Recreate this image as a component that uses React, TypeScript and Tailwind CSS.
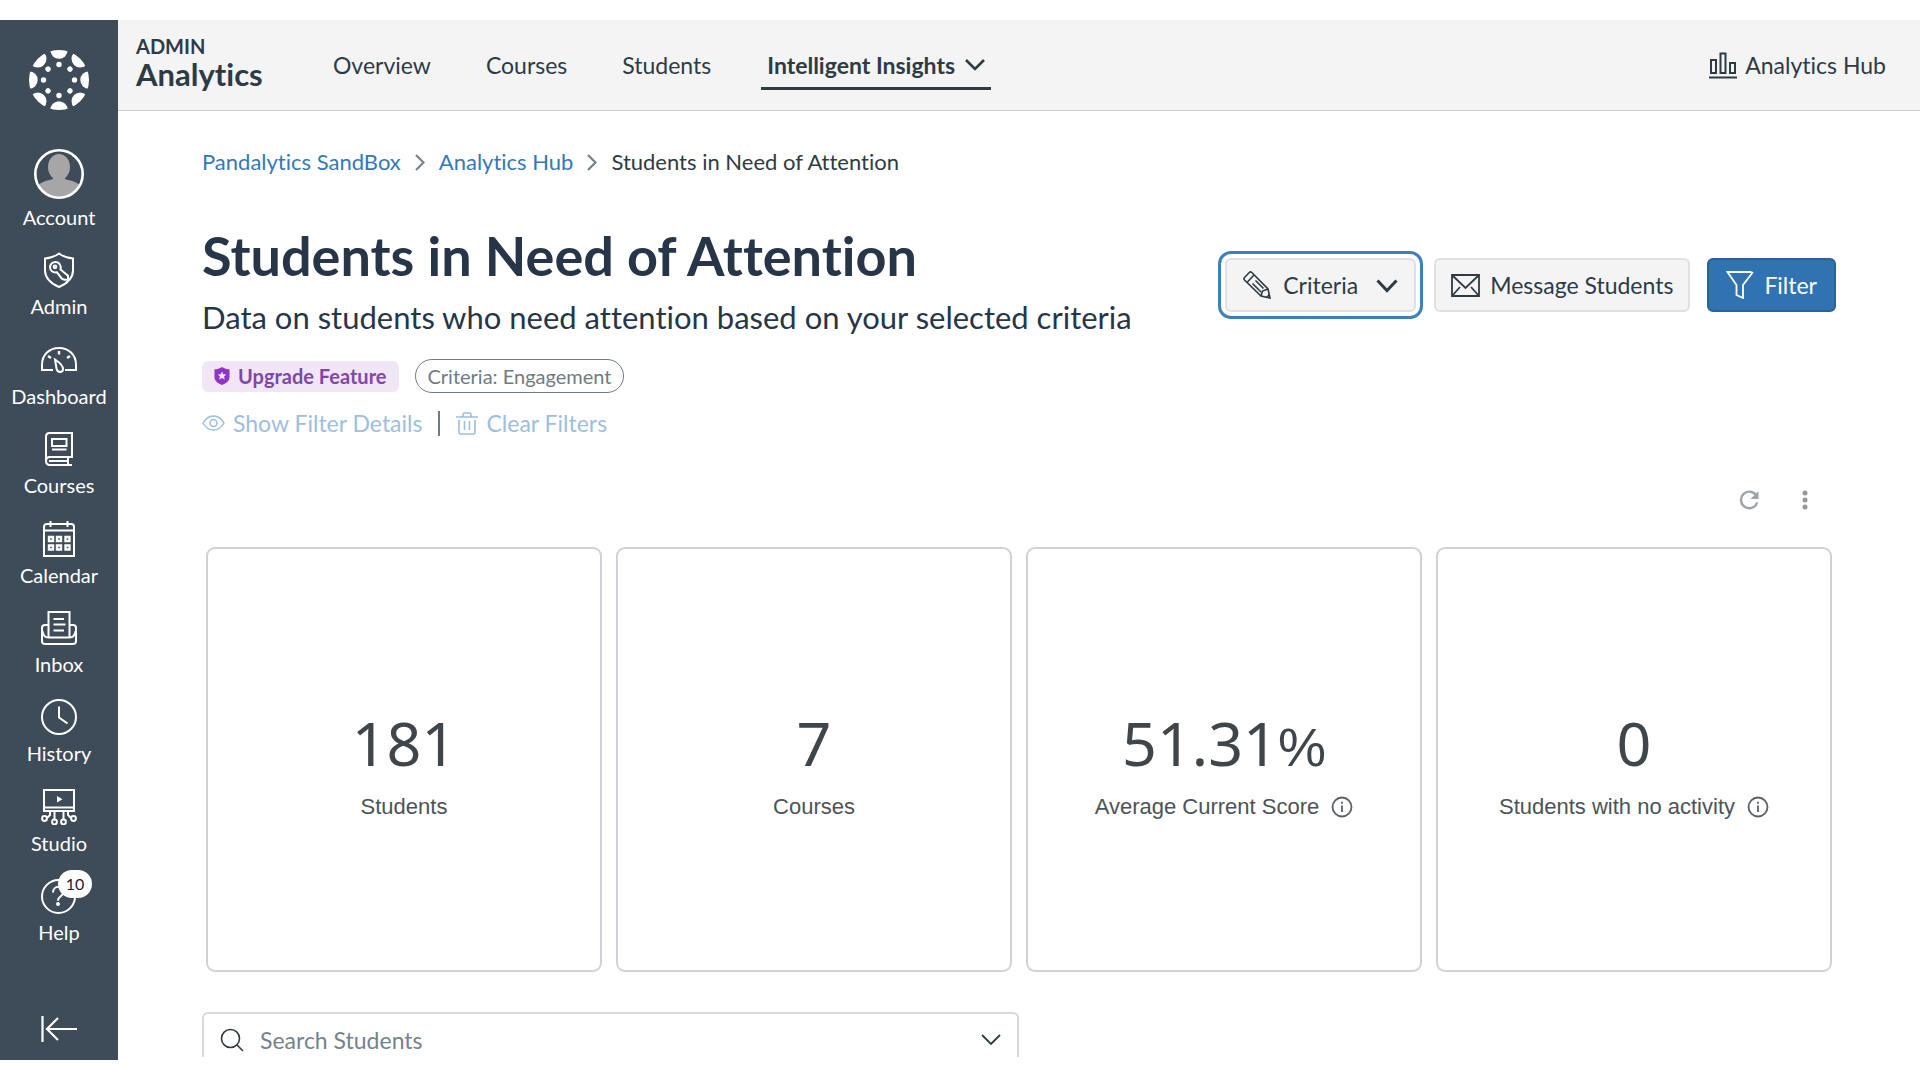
import type { ReactNode } from "react";

const NAV_ITEMS = ["Overview", "Courses", "Students"];

export default function App() {
  return (
    <div className="flex h-screen min-h-[800px] overflow-hidden bg-white py-5 font-['Lato',sans-serif] text-[#2d3b45] [font-variant-ligatures:none]">
      <Sidebar />

      <div className="flex min-w-0 flex-1 flex-col">
        <TopBar />

        <main className="flex-1 overflow-hidden pl-[84px] pr-[84px]">
          <Breadcrumbs />

          {/* Title + actions */}
          <div className="mt-[47px] flex items-start justify-between">
            <div>
              <h1 className="text-[54px] leading-[66px] font-bold text-[#273548]">
                Students in Need of Attention
              </h1>
              <p className="mt-[9px] text-[31px] leading-[38px] text-[#273548]">
                Data on students who need attention based on your selected criteria
              </p>
            </div>

            <div className="mt-[35px] flex items-center">
              <button className="mr-[18px] flex h-[54px] items-center rounded-md border-2 border-[#e0e0e0] bg-[#f4f4f4] px-4 text-[23px] leading-7 outline-3 outline-offset-4 outline-[#3d7fbf]">
                <PencilIcon />
                <span className="ml-3">Criteria</span>
                <svg width="22" height="14" viewBox="0 0 22 14" fill="none" className="ml-[18px] mt-[2px]">
                  <path d="M1.5 1.5 11 11.5 20.5 1.5" stroke="#2d3b45" strokeWidth="3" />
                </svg>
              </button>
              <button className="mr-[17px] flex h-[54px] items-center rounded-md border-2 border-[#e0e0e0] bg-[#f4f4f4] px-[15px] text-[23px] leading-7">
                <MailIcon />
                <span className="ml-[10px]">Message Students</span>
              </button>
              <button className="flex h-[54px] items-center rounded-md border-2 border-[#28629c] bg-[#3172b2] px-[17px] text-[23px] leading-7 text-white">
                <FunnelIcon />
                <span className="ml-[10px]">Filter</span>
              </button>
            </div>
          </div>

          {/* Tags */}
          <div className="mt-[23px] flex items-center">
            <span className="flex h-[31px] items-center rounded-md bg-[#f1e6f5] px-3 text-[20px] leading-6 font-bold text-[#8345a8]">
              <ShieldStarIcon />
              <span className="ml-2">Upgrade Feature</span>
            </span>
            <span className="ml-4 flex h-[34px] items-center rounded-full border border-[#6f7b83] px-3 text-[20px] leading-6 text-[#6f7b83]">
              Criteria: Engagement
            </span>
          </div>

          <div className="mt-4 flex h-7 items-center text-[23px] leading-7 text-[#9dbedd]">
            <button className="flex items-center">
              <EyeIcon />
              <span className="ml-2">Show Filter Details</span>
            </button>
            <span className="ml-4 h-[25px] w-[2px] bg-[#6f7b83]" />
            <button className="ml-4 flex items-center">
              <TrashIcon />
              <span className="ml-2">Clear Filters</span>
            </button>
          </div>

          {/* Tile toolbar */}
          <div className="mt-[51px] flex h-6 items-center justify-end gap-8 pr-[19px]">
            <button aria-label="Refresh">
              <svg width="24" height="24" viewBox="0 0 24 24" fill="none">
                <path d="M19.3 7.5A8.3 8.3 0 1 0 20.2 14.5" stroke="#9ea4a8" strokeWidth="2.4" />
                <path d="M21.5 3v8h-8z" fill="#9ea4a8" />
              </svg>
            </button>
            <button aria-label="More options">
              <svg width="24" height="24" viewBox="0 0 24 24" fill="#939a9e">
                <circle cx="12" cy="5" r="2.5" />
                <circle cx="12" cy="12" r="2.5" />
                <circle cx="12" cy="19" r="2.5" />
              </svg>
            </button>
          </div>

          <div className="mt-[35px] grid grid-cols-4 gap-[14px] px-1">
            <StatCard value="181" label="Students" />
            <StatCard value="7" label="Courses" />
            <StatCard value="51.31" suffix="%" label="Average Current Score" info />
            <StatCard value="0" label="Students with no activity" info />
          </div>

          {/* Student search */}
          <label className="mt-[40px] flex h-[45px] w-1/2 items-center rounded-t-md border-2 border-b-0 border-[#d5d9dc] px-4 pt-2">
            <svg width="24" height="24" viewBox="0 0 24 24" fill="none" stroke="#2d3b45" strokeWidth="1.6">
              <circle cx="10.5" cy="10.5" r="9" />
              <path d="m17 17 6 6" />
            </svg>
            <input
              type="text"
              aria-label="Search Students"
              placeholder="Search Students"
              className="ml-4 min-w-0 flex-1 bg-transparent text-[23px] leading-7 outline-none placeholder:text-[#76828b]"
            />
            <svg width="20" height="12" viewBox="0 0 20 12" fill="none">
              <path d="m1 1 9 9 9-9" stroke="#2d3b45" strokeWidth="1.8" />
            </svg>
          </label>
        </main>
      </div>
    </div>
  );
}

function TopBar() {
  return (
    <header className="flex h-[91px] shrink-0 items-start border-b border-[#c3cad0] bg-[#f4f4f4] pl-[18px] pr-[34px]">
      <div className="mt-[14px] w-[197px] font-bold">
        <div className="text-[20px] leading-6">ADMIN</div>
        <div className="text-[31px] leading-8">Analytics</div>
      </div>
      <nav className="mt-[31px] flex text-[23px] leading-7">
        {NAV_ITEMS.map((item) => (
          <a key={item} href="#" className="mr-[55px]">
            {item}
          </a>
        ))}
        <a
          href="#"
          className="-ml-[5px] flex h-[39px] items-start border-b-3 border-[#2d3b45] px-[6px] font-bold"
        >
          Intelligent Insights
          <svg width="20" height="12" viewBox="0 0 20 12" fill="none" className="ml-[10px] mt-2">
            <path d="m1 1 9 9 9-9" stroke="#2d3b45" strokeWidth="2.6" />
          </svg>
        </a>
      </nav>
      <a href="#" className="ml-auto mt-[31px] flex items-center text-[23px] leading-7">
        <svg width="28" height="27" viewBox="0 0 28 27" fill="none" stroke="#2d3b45" strokeWidth="2" className="mr-2">
          <path d="M2 8h5v13H2zM11.5 1.5h5V21h-5zM21 11h5v10h-5zM0 25.5h28" />
        </svg>
        Analytics Hub
      </a>
    </header>
  );
}

function Breadcrumbs() {
  return (
    <nav
      aria-label="Breadcrumb"
      className="mt-[37px] flex items-center gap-[14px] text-[22px] leading-7 text-[#3478b8]"
    >
      <a href="#">Pandalytics SandBox</a>
      <CrumbArrow />
      <a href="#">Analytics Hub</a>
      <CrumbArrow />
      <span className="text-[#2d3b45]">Students in Need of Attention</span>
    </nav>
  );
}

function CrumbArrow() {
  return (
    <svg width="10" height="17" viewBox="0 0 10 17" fill="none">
      <path d="m1 1 7.5 7.5L1 16" stroke="#76828b" strokeWidth="2.2" />
    </svg>
  );
}

function StatCard({
  value,
  suffix,
  label,
  info,
}: {
  value: string;
  suffix?: string;
  label: string;
  info?: boolean;
}) {
  return (
    <section className="flex h-[425px] flex-col items-center rounded-[9px] border-2 border-[#cfd2d8] pt-[150px]">
      <div className="font-['Noto_Sans',sans-serif] text-[61px] leading-[88px] text-[#3f464b]">
        {value}
        {suffix && (
          <span className="font-['Liberation_Sans',sans-serif] text-[54px] leading-none">
            {suffix}
          </span>
        )}
      </div>
      <div className="mt-[6px] flex items-center gap-3 font-['Liberation_Sans',sans-serif] text-[22px] leading-7 text-[#4c5358]">
        {label}
        {info && (
          <svg width="22" height="22" viewBox="0 0 22 22" fill="none">
            <circle cx="11" cy="11" r="9.5" stroke="#5a6166" strokeWidth="1.8" />
            <path d="M11 9.5v6.5M11 5.8v2" stroke="#5a6166" strokeWidth="1.8" />
          </svg>
        )}
      </div>
    </section>
  );
}

/* ---------- Sidebar ---------- */

function Sidebar() {
  return (
    <aside className="flex w-[118px] shrink-0 flex-col items-center bg-[#3e4b58] text-white">
      <a href="#" aria-label="Home" className="mt-[30px]">
        <CanvasLogo />
      </a>

      <nav className="mt-[39px] flex h-[795px] flex-col justify-between">
        <SideItem label="Account">
          <Avatar />
        </SideItem>
        <SideItem label="Admin">
          <svg width="36" height="36" viewBox="0 0 36 36" fill="none" stroke="white" strokeWidth="2">
            <path d="M18 1.5c4 3 8.5 4.6 14 5v12c0 7-5 12.5-14 16.5C9 31 4 25.5 4 18.5v-12c5.5-.4 10-2 14-5z" />
            <path d="M19.5 17.5c1-3.5-1-7.500-5-7.500-3 0-5.500 2.300-5.500 5.300 0 3.800 3.400 5.700 7 5l5 6.500 2.500 1h3.500v-4z" />
            <circle cx="14" cy="14.8" r="1.4" />
          </svg>
        </SideItem>
        <SideItem label="Dashboard">
          <svg width="36" height="36" viewBox="0 0 36 36" fill="none" stroke="white" strokeWidth="2">
            <path d="M12 28H1v-5C1 12.5 8.5 6 18 6s17 6.500 17 17v5H24" />
            <path d="M18 9v3.500M7 14l3 2M29 14l-3 2" strokeWidth="2.4" />
            <path d="M14 17.500c4.500 3 8 6.500 8 9.500 0 2-1.200 3-3 3s-3-1.300-3.500-3.500z" />
          </svg>
        </SideItem>
        <SideItem label="Courses">
          <svg width="36" height="36" viewBox="0 0 36 36" fill="none" stroke="white" strokeWidth="2">
            <path d="M5 30V5.500C5 3 6.500 2 8.500 2H31v24H9c-2.500 0-4 1.600-4 4s1.500 4 4 4h22" />
            <path d="M11 8h14.500v7H11zM11 18.500h14.500M8 30h19v-4M27 30v4" />
          </svg>
        </SideItem>
        <SideItem label="Calendar">
          <svg width="36" height="36" viewBox="0 0 36 36" fill="none" stroke="white" strokeWidth="2">
            <path d="M3 35V6c0-2 1-3 3-3h24c2 0 3 1 3 3v29zM3 9.500h30M9.500 0v6M26.500 0v6" />
            <path
              d="M8 16h4v4H8zM16 16h4v4h-4zM24.500 16h4v4h-4zM8 24.500h4v4H8zM16 24.500h4v4h-4zM24.500 24.500h4v4h-4z"
              strokeWidth="2.4"
            />
          </svg>
        </SideItem>
        <SideItem label="Inbox">
          <svg width="36" height="36" viewBox="0 0 36 36" fill="none" stroke="white" strokeWidth="2">
            <path d="M7.500 27V2h21v25" />
            <path d="M12.500 9H23M12.500 14.500h12M12.500 20.500H23" />
            <path d="M7.500 15H4c-2 0-3 1-3 3v13c0 2 1 3 3 3h28c2 0 3-1 3-3V18c0-2-1-3-3-3h-3.500M1.500 21c.5 4 2.500 6.500 6 6.500h21c3.500 0 5.500-2.500 6-6.500" />
          </svg>
        </SideItem>
        <SideItem label="History">
          <svg width="36" height="36" viewBox="0 0 36 36" fill="none" stroke="white" strokeWidth="2">
            <circle cx="18" cy="18" r="17" />
            <path d="M18 7.500V18.500l8.500 6" />
          </svg>
        </SideItem>
        <SideItem label="Studio">
          <svg width="36" height="36" viewBox="0 0 36 36" fill="none" stroke="white" strokeWidth="2">
            <path d="M3 1h30v21H3zM3 18.500h30" />
            <path d="m16 7 5.500 3.300L16 13.500z" fill="white" stroke="none" />
            <path d="M9 22v4l-3 3M13.500 22v9M22.500 22v9M27 22v4l3 3" />
            <circle cx="3.5" cy="29.5" r="2.4" />
            <circle cx="13.5" cy="33" r="2.4" />
            <circle cx="22.5" cy="33" r="2.4" />
            <circle cx="32.5" cy="29.5" r="2.4" />
          </svg>
        </SideItem>
        <SideItem label="Help" badge="10">
          <svg width="36" height="36" viewBox="0 0 36 36" fill="none" stroke="white" strokeWidth="2">
            <circle cx="17.5" cy="18.5" r="16.5" />
            <path d="M12 14.500c0-3.500 2.300-5.700 5.500-5.700s5.500 2 5.500 5c0 4-6 4-6 9" />
            <circle cx="17" cy="26" r="2" fill="white" stroke="none" />
          </svg>
        </SideItem>
      </nav>

      <button aria-label="Minimize navigation" className="mt-auto mb-[18px]">
        <svg width="36" height="26" viewBox="0 0 36 26" fill="none" stroke="white" strokeWidth="2.2">
          <path d="M1.500 0v26M36 13H6M17 2 6 13l11 11" />
        </svg>
      </button>
    </aside>
  );
}

function SideItem({
  label,
  badge,
  children,
}: {
  label: string;
  badge?: string;
  children: ReactNode;
}) {
  return (
    <a href="#" className="flex flex-col items-center gap-[6px] text-[20px] leading-6">
      <span className="relative">
        {children}
        {badge && (
          <span className="absolute -top-2 left-[17px] flex h-7 w-[34px] items-center justify-center rounded-full bg-white text-[16px] leading-5 text-[#1f2328]">
            {badge}
          </span>
        )}
      </span>
      {label}
    </a>
  );
}

function CanvasLogo() {
  const angles = [0, 45, 90, 135, 180, 225, 270, 315];
  return (
    <svg width="60" height="60" viewBox="0 0 60 60" fill="white">
      <clipPath id="logo-disc">
        <circle cx="30" cy="30" r="30" />
      </clipPath>
      <g clipPath="url(#logo-disc)">
        {angles.map((a) => (
          <g key={a} transform={`rotate(${a} 30 30)`}>
            <circle cx="30" cy="0" r="8.7" />
            <circle cx="30" cy="14.5" r="2.7" />
          </g>
        ))}
      </g>
    </svg>
  );
}

function Avatar() {
  return (
    <svg width="50" height="50" viewBox="0 0 50 50">
      <clipPath id="avatar-disc">
        <circle cx="25" cy="25" r="23" />
      </clipPath>
      <g clipPath="url(#avatar-disc)" fill="#a6a6a6">
        <ellipse cx="25" cy="18" rx="11" ry="13" />
        <path d="M19 26h12v4c3 1.500 13 2 16 8v12H3V38c3-6 13-6.500 16-8z" />
      </g>
      <circle cx="25" cy="25" r="23.7" fill="none" stroke="white" strokeWidth="2.6" />
    </svg>
  );
}

/* ---------- Icons ---------- */

function PencilIcon() {
  return (
    <svg width="28" height="28" viewBox="0 0 28 28" fill="none" stroke="#2d3b45" strokeWidth="1.6">
      <path d="M1.500 6.500 6.300 1.500c.8-.7 1.700-.7 2.500 0L25 18l2 9-9-2L1.500 9c-.7-.8-.7-1.700 0-2.500z" />
      <path d="m4 11.500 7-7.500M18 25l1.500-5L25 18M9.500 12.500l8.500 8.500M12.500 9.500l8 8M23.500 26.500l3-3" />
    </svg>
  );
}

function MailIcon() {
  return (
    <svg width="29" height="23" viewBox="0 0 29 23" fill="none" stroke="#2d3b45" strokeWidth="1.8">
      <path d="M1 1h27v21H1zM1 1l13.500 13L28 1M1 22l8-9M28 22l-8-9" />
    </svg>
  );
}

function FunnelIcon() {
  return (
    <svg width="28" height="28" viewBox="0 0 28 28" fill="none" stroke="white" strokeWidth="1.8">
      <path d="M25.500 1H1.500L10.500 14v10l6.500 3V14L27 1" />
    </svg>
  );
}

function ShieldStarIcon() {
  return (
    <svg width="16" height="18" viewBox="0 0 16 18">
      <path d="M8 0c2.500 1.600 5 2.300 7.500 2.300V10c0 3.800-3 6.400-7.500 8-4.500-1.600-7.500-4.200-7.500-8V2.300C3 2.300 5.500 1.600 8 0z" fill="#8f35c4" />
      <path d="m8 4.500 1.300 2.800 3 .3-2.200 2 .6 3L8 11.100l-2.700 1.500.6-3-2.200-2 3-.3z" fill="#f1e6f5" />
    </svg>
  );
}

function EyeIcon() {
  return (
    <svg width="23" height="16" viewBox="0 0 23 16" fill="none" stroke="#9dbedd" strokeWidth="1.5">
      <path d="M1 8c2.500-4.500 6-7 10.500-7S19.500 3.500 22 8c-2.500 4.500-6 7-10.500 7S3.500 12.500 1 8z" />
      <circle cx="11.5" cy="8" r="3.5" />
    </svg>
  );
}

function TrashIcon() {
  return (
    <svg width="22" height="23" viewBox="0 0 22 23" fill="none" stroke="#9dbedd" strokeWidth="1.6">
      <path d="M0 5h22M7 5V2.500C7 1.500 7.500 1 8.500 1h5c1 0 1.500.5 1.500 1.500V5M3 8v12.500c0 1 .5 1.500 1.500 1.500h13c1 0 1.500-.5 1.500-1.500V8M8.500 9v9M13.500 9v9" />
    </svg>
  );
}
